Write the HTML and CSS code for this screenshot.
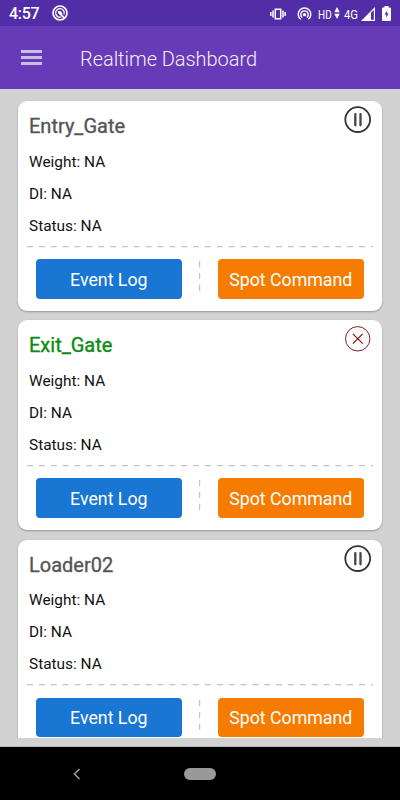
FILE: index.html
```html
<!DOCTYPE html>
<html lang="en">
<head>
<meta charset="utf-8">
<title>Realtime Dashboard</title>
<link rel="stylesheet" href="styles.css">
</head>
<body>
<svg class="defs" width="0" height="0">
  <symbol id="pause" viewBox="0 0 28 28">
    <circle cx="13.7" cy="13.6" r="12.4" fill="none" stroke="#333" stroke-width="1.8"/>
    <path d="M11.3 8.1v11.2M16.5 8.1v11.2" stroke="#444" stroke-width="2.3" stroke-linecap="round"/>
  </symbol>
  <symbol id="cross" viewBox="0 0 28 28">
    <circle cx="13.7" cy="13.8" r="12.2" fill="none" stroke="#8b1a1a" stroke-width="1"/>
    <path d="M8.9 8.9l9.8 9.8M18.7 8.9l-9.8 9.8" stroke="#8b1010" stroke-width="1.2"/>
  </symbol>
  <symbol id="rule" viewBox="0 0 346 2">
    <path d="M0 .6H346" stroke="#c4c4c4" stroke-width="1.2" stroke-dasharray="6 5.86"/>
  </symbol>
  <symbol id="divider" viewBox="0 0 2 32">
    <path d="M.6 0V30.5" stroke="#c4c4c4" stroke-width="1.2" stroke-dasharray="6.2 5.7"/>
  </symbol>
</svg>
<header class="status">
  <span class="clock">4:57</span>
  <svg class="app-icon" width="16" height="16" viewBox="0 0 16 16" fill="none" stroke="#fff">
    <circle cx="8" cy="8" r="7" stroke-width="1.7"/>
    <path d="M12 9.4A4.3 4.3 0 1 0 9.4 12" stroke-width="1.3"/>
    <path d="M6.5 7.3l5.8 5.6" stroke-width="1.8"/>
    <path d="M5.2 5.8l3.6.4 1.8 2.6-2.4 1.2z" fill="#fff" stroke="none"/>
  </svg>
  <svg class="vibrate" width="16" height="12" viewBox="0 0 16 12" fill="none" stroke="#fff" stroke-width="1.5">
    <path d="M5.3 1.2h5.4v9.6H5.3zM.8 4v4M3 2.5v7M13 2.5v7M15.2 4v4"/>
  </svg>
  <svg class="hotspot" width="15" height="13" viewBox="0 0 15 13" fill="none" stroke="#fff" stroke-width="1.4">
    <path d="M3.7 12.3A6.3 6.3 0 1 1 11.3 12.3M5.2 10.5A3.7 3.7 0 1 1 9.8 10.5"/>
    <circle cx="7.5" cy="7.7" r="1.6" fill="#fff" stroke="none"/>
  </svg>
  <span class="net hd">HD</span>
  <svg class="arrows" width="6" height="12" viewBox="0 0 6 12" fill="#fff"><path d="M3 0l2.7 5.2H.3zM3 12L.3 6.8h5.4z"/></svg>
  <span class="net g4">4G</span>
  <svg class="signal" width="14" height="14" viewBox="0 0 14 14"><path d="M14 0v14H0z" fill="#fff"/><path d="M12.8 3v9.8H10V5.8z" fill="#512da8"/></svg>
  <svg class="battery" width="9" height="15" viewBox="0 0 9 15"><path d="M2.5 0h4v1.4H8q1 0 1 1V14q0 1-1 1H1q-1 0-1-1V2.4q0-1 1-1h1.5z" fill="#fff"/><path d="M5.1 4.6L2.5 8.6h1.7v3.2l2.4-4.2H5.1z" fill="#512da8"/></svg>
</header>
<div class="appbar">
  <div class="menu"><i></i><i></i><i></i></div>
  <h1>Realtime Dashboard</h1>
</div>
<main class="list">
  <section class="card">
    <svg class="state"><use href="#pause"/></svg>
    <h2>Entry_Gate</h2>
    <p class="weight">Weight: NA</p><p class="di">DI: NA</p><p class="stat">Status: NA</p>
    <svg class="rule"><use href="#rule"/></svg>
    <div class="actions"><button class="log"><span>Event Log</span></button><svg class="divider"><use href="#divider"/></svg><button class="spot"><span>Spot Command</span></button></div>
  </section>
  <section class="card">
    <svg class="state"><use href="#cross"/></svg>
    <h2 class="active">Exit_Gate</h2>
    <p class="weight">Weight: NA</p><p class="di">DI: NA</p><p class="stat">Status: NA</p>
    <svg class="rule"><use href="#rule"/></svg>
    <div class="actions"><button class="log"><span>Event Log</span></button><svg class="divider"><use href="#divider"/></svg><button class="spot"><span>Spot Command</span></button></div>
  </section>
  <section class="card">
    <svg class="state"><use href="#pause"/></svg>
    <h2>Loader02</h2>
    <p class="weight">Weight: NA</p><p class="di">DI: NA</p><p class="stat">Status: NA</p>
    <svg class="rule"><use href="#rule"/></svg>
    <div class="actions"><button class="log"><span>Event Log</span></button><svg class="divider"><use href="#divider"/></svg><button class="spot"><span>Spot Command</span></button></div>
  </section>
</main>
<nav class="navbar">
  <svg class="back" width="8" height="12" viewBox="0 0 8 12"><path d="M6.5 1L1.5 6l5 5" fill="none" stroke="#999" stroke-width="1.6"/></svg>
  <span class="home"></span>
</nav>
</body>
</html>
```
FILE: styles.css
```css
* { box-sizing: border-box; }
body {
  margin: 0;
  width: 400px;
  height: 800px;
  overflow: hidden;
  display: flex;
  flex-direction: column;
  background: #d2d2d2;
  font-family: Roboto, "Liberation Sans", sans-serif;
  color: #111;
}
.defs { position: absolute; }
svg { display: block; flex: none; }
h1, h2, p { margin: 0; font-weight: 400; white-space: nowrap; }

.status {
  flex: none;
  height: 26px;
  background: #512da8;
  color: #fff;
  display: flex;
  align-items: center;
  padding: 1px 9px 0 9px;
}
.clock { width: 43px; font-size: 16px; font-weight: 500; line-height: 26px; letter-spacing: -.3px; padding-top: 1px; }
.app-icon { margin-top: -1px; }
.vibrate { margin-left: 202px; }
.hotspot { margin-left: 11px; margin-top: -1px; }
.net { font-size: 13.5px; line-height: 26px; transform-origin: 0 50%; transform: scaleX(.74); }
.hd { margin-left: 6px; width: 16px; }
.arrows { margin-top: -2px; }
.g4 { margin-left: 4px; width: 17px; transform: scaleX(.84); }
.battery { margin-left: 7px; }

.appbar {
  flex: none;
  height: 63px;
  background: #673ab7;
  display: flex;
  align-items: center;
  padding: 0 0 0 21px;
}
.menu { width: 21px; display: grid; gap: 3px; margin-top: -1px; }
.menu i { height: 3px; background: #cbbee6; }
h1 { margin-left: 38px; font-size: 20px; font-weight: 300; color: #f4effb; letter-spacing: -.04px; line-height: 24px; padding-top: 2px; }

.list {
  flex: none;
  height: 649px;
  overflow: hidden;
  padding: 12px 18px 0;
}
.card {
  position: relative;
  height: 210px;
  margin-bottom: 9.25px;
  padding: 13px 9px 0 11px;
  background: #fff;
  border-radius: 9px;
  box-shadow: 0 1px 2px rgba(0, 0, 0, .3);
}
.state { position: absolute; right: 10px; top: 5px; width: 28px; height: 28px; }
h2 { font-size: 20px; line-height: 24px; color: #555; -webkit-text-stroke: .35px currentColor; }
h2.active { color: #0c8a12; }
p { font-size: 15.4px; line-height: 18px; margin-top: 14.2px; }
p.weight { margin-top: 14.5px; }
.rule { width: 346px; height: 2px; margin: 11.1px 0 0 -2px; }
.actions { display: flex; padding: 11.2px 0 0 7px; }
button {
  width: 145.6px;
  height: 39.6px;
  border: 0;
  border-radius: 4px;
  padding: 2px 0 0;
  font: 400 17.75px/24px Roboto, "Liberation Sans", sans-serif;
  color: #fff;
  white-space: nowrap;
}
.log { background: #1976d2; }
.spot { background: #f57c00; }
.divider { width: 2px; height: 32px; margin: 2px 17.2px 0; }

.navbar {
  flex: none;
  margin-top: 9px;
  height: 53px;
  background: #000;
  box-shadow: 0 -1px 0 #b4b4b4;
  display: flex;
  align-items: center;
  padding-left: 73px;
}
.home { width: 32px; height: 12px; border-radius: 6px; background: #999; margin-left: 103px; }
```
